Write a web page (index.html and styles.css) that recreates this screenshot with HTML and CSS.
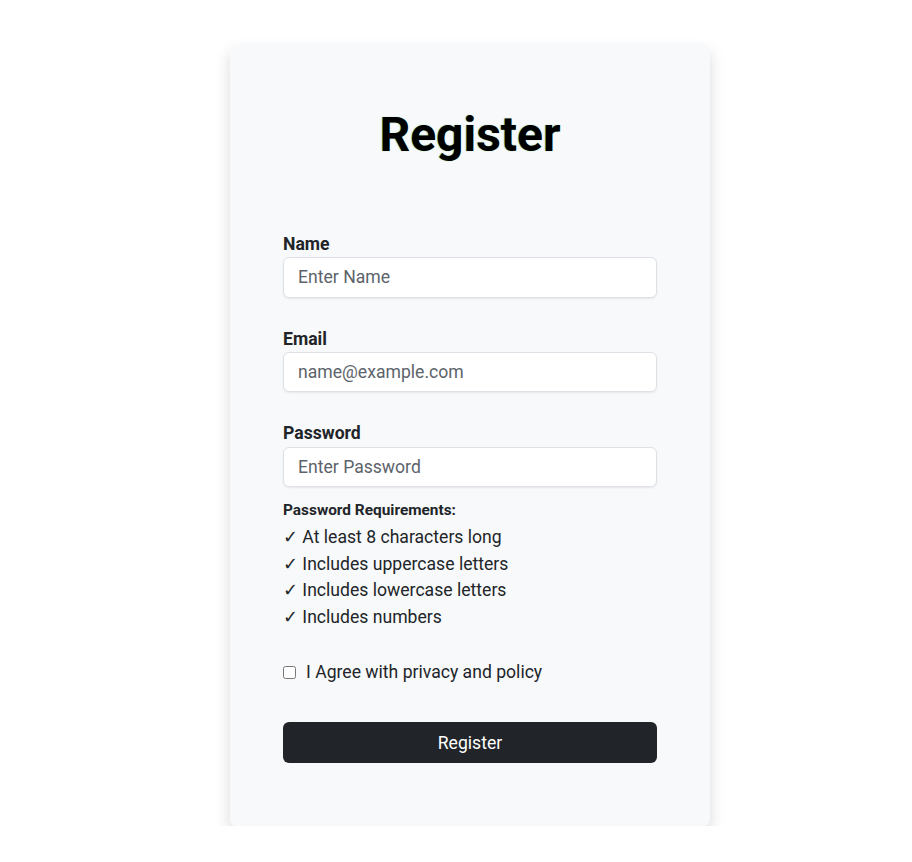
FILE: index.html
```html
<!DOCTYPE html>
<html lang="en">
<head>
<meta charset="utf-8">
<title>Register</title>
<link rel="stylesheet" href="styles.css">
</head>
<body>
<div class="card">
  <h1 class="title">Register</h1>
  <form class="form">
    <div class="field">
      <label class="label">Name</label>
      <input class="input" type="text" placeholder="Enter Name">
    </div>
    <div class="field">
      <label class="label">Email</label>
      <input class="input" type="email" placeholder="name@example.com">
    </div>
    <div class="field pw">
      <label class="label">Password</label>
      <input class="input" type="password" placeholder="Enter Password">
    </div>
    <div class="reqs">
      <div class="reqs-title">Password Requirements:</div>
      <div class="req">✓ At least 8 characters long</div>
      <div class="req">✓ Includes uppercase letters</div>
      <div class="req">✓ Includes lowercase letters</div>
      <div class="req">✓ Includes numbers</div>
    </div>
    <div class="agree">
      <input class="check" type="checkbox" id="agree">
      <label for="agree" class="agree-label">I Agree with privacy and policy</label>
    </div>
    <button class="btn" type="button">Register</button>
  </form>
</div>
</body>
</html>
```

FILE: styles.css
```css
* { box-sizing: border-box; }
html, body { margin: 0; padding: 0; background: #fff; }
body {
  font-family: Roboto, "Liberation Sans", sans-serif;
  color: #212529;
  font-size: 17.6px;
  line-height: 1.5;
}
.card {
  width: 480px;
  margin: 44px 0 0 calc(50% - 226px);
  background: #f8f9fa;
  border-radius: 6px;
  box-shadow: 0 8px 16px rgba(0,0,0,0.15);
  padding: 62px 53px 63px;
}
.title {
  margin: 0;
  text-align: center;
  font-size: 48px;
  font-weight: 700;
  line-height: 1.2;
  color: #000;
  text-shadow: -0.5px 0 1px rgba(0,140,0,0.55);
}
.form { margin-top: 67px; display: flex; flex-direction: column; }
.field { display: flex; flex-direction: column; margin-bottom: 28px; }
.field.pw { margin-bottom: 12px; }
.label { font-weight: 700; font-size: 17.6px; line-height: 26.4px; }
.input {
  height: 40.5px;
  width: 100%;
  border: 1px solid #dee2e6;
  border-radius: 6px;
  background: #fff;
  padding: 0 14px;
  font-family: inherit;
  font-size: 17.6px;
  color: #212529;
  box-shadow: 0 1px 2px rgba(0,0,0,0.075);
}
.input::placeholder { color: #5c636a; }
.reqs-title { font-size: 15.4px; font-weight: 700; line-height: 23px; margin-bottom: 2px; }
.req { font-size: 17.6px; line-height: 26.4px; }
.agree { display: flex; align-items: center; margin-top: 29px; gap: 10px; }
.check { margin: 0; width: 13px; height: 13px; }
.agree-label { font-size: 17.6px; line-height: 26.4px; }
.btn {
  margin-top: 37px;
  height: 40.5px;
  width: 100%;
  background: #212529;
  color: #fff;
  border: 0;
  border-radius: 6px;
  font-family: inherit;
  font-size: 17.6px;
}
```
